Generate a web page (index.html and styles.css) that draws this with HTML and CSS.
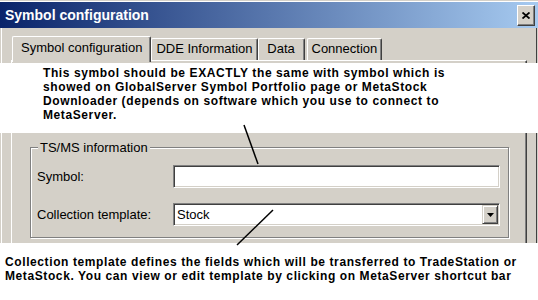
FILE: index.html
```html
<!DOCTYPE html>
<html>
<head>
<title>Symbol configuration</title>
<meta name="viewport" content="width=device-width, initial-scale=1.0">
<link rel="stylesheet" href="styles.css">
</head>
<body>
<div class="window">
  <div class="titlebar">
    <span class="title">Symbol configuration</span>
    <div class="close">
      <svg width="8" height="7" viewBox="0 0 8 7">
        <path d="M0.5 0.5 L7.5 6.5 M7.5 0.5 L0.5 6.5" stroke="#000" stroke-width="1.8" fill="none"/>
      </svg>
    </div>
  </div>

  <div class="tabs">
    <div class="tab active">Symbol configuration</div>
    <div class="tab">DDE Information</div>
    <div class="tab tab-data">Data</div>
    <div class="tab">Connection</div>
  </div>

  <div class="panel">
    <fieldset class="group">
      <legend>TS/MS information</legend>
      <div class="form">
        <label>Symbol:</label>
        <div class="field"></div>
        <label>Collection template:</label>
        <div class="field combo">
          <span class="value">Stock</span>
          <span class="drop">
            <svg width="7" height="4" viewBox="0 0 7 4"><path d="M0 0 H7 L3.5 4 Z" fill="#000"/></svg>
          </span>
        </div>
      </div>
    </fieldset>
  </div>

  <!-- callouts drawn over the dialog -->
  <div class="note note-top">
    This symbol should be EXACTLY the same with symbol which is<br>
    showed on GlobalServer Symbol Portfolio page or MetaStock<br>
    Downloader (depends on software which you use to connect to<br>
    MetaServer.
  </div>
  <div class="note note-bottom">
    Collection template defines the fields which will be transferred to TradeStation or<br>
    MetaStock. You can view or edit template by clicking on MetaServer shortcut bar
  </div>
  <svg class="pointers" width="538" height="300">
    <line x1="244" y1="125" x2="258" y2="164" stroke="#000" stroke-width="1.5"/>
    <line x1="273" y1="210" x2="237" y2="245" stroke="#000" stroke-width="1.5"/>
  </svg>
</div>
</body>
</html>
```

FILE: styles.css
```css
body {
  margin: 0;
  font-family: "Liberation Sans", Arial, sans-serif;
  font-size: 13px;
  color: #000;
}

.window {
  position: relative;
  width: 538px;
  height: 300px;
  box-sizing: border-box;
  padding-top: 2px;
  overflow: hidden;
  display: flex;
  flex-direction: column;
  background: #d4d0c8;
  box-shadow: inset 0 1px #d4d0c8, inset 0 2px #fff,
              inset 1px 0 #d4d0c8, inset 2px 0 #fff,
              inset -1px 0 #d4d0c8, inset -2px 0 #404040;
}

/* title bar */
.titlebar {
  height: 26px;
  display: flex;
  align-items: center;
  justify-content: space-between;
  background: linear-gradient(to right, #0a246a, #a6caf0);
}

.title {
  padding-left: 5px;
  color: #fff;
  font-weight: bold;
  font-size: 14px;
}

.close {
  width: 18px;
  height: 21px;
  margin-right: 3px;
  box-sizing: border-box;
  display: flex;
  align-items: center;
  justify-content: center;
  background: #d4d0c8;
  border: 1px solid;
  border-color: #fff #404040 #404040 #fff;
  box-shadow: inset -1px -1px #808080;
}

/* tabs */
.tabs {
  display: flex;
  align-items: flex-end;
  margin: 8px 0 0 12px;
}

.tab {
  position: relative;
  min-width: 47px;
  box-sizing: border-box;
  padding: 0 4px 2px 4px;
  line-height: 19px;
  text-align: center;
  white-space: nowrap;
  background: #d4d0c8;
  border-top: 1px solid #fff;
  border-left: 1px solid #fff;
  border-right: 1px solid #404040;
  border-radius: 2px 2px 0 0;
  box-shadow: inset -1px 0 #808080;
}

.tab.active {
  z-index: 1;
  padding: 0 8px 4px 8px;
  line-height: 21px;
  margin-bottom: -2px;
}

.tab-data {
  margin-right: 2px;
}

/* tab page */
.panel {
  flex: 1;
  margin: 0 11px;
  padding: 79px 17px 0 18px;
  border-top: 1px solid #fff;
  border-left: 1px solid #fff;
  border-right: 1px solid #404040;
  box-shadow: inset -1px 0 #808080;
}

.group {
  margin: 0;
  min-width: 0;
  padding: 0 6px 11px 6px;
  border: 1px solid #808080;
  box-shadow: inset 1px 1px #fff, 1px 1px #fff;
}

.group legend {
  margin-left: 1px;
  padding: 0 2px;
  background: #d4d0c8;
}

.form {
  margin-top: 10px;
  display: grid;
  grid-template-columns: 136px 327px;
  row-gap: 15px;
  align-items: center;
}

.field {
  height: 23px;
  box-sizing: border-box;
  background: #fff;
  border: 1px solid;
  border-color: #808080 #fff #fff #808080;
  box-shadow: inset 1px 1px #404040, inset -1px -1px #d4d0c8;
}

.combo {
  display: flex;
  align-items: center;
  padding: 1px;
}

.combo .value {
  flex: 1;
  padding-left: 2px;
}

.drop {
  width: 16px;
  height: 19px;
  box-sizing: border-box;
  display: flex;
  align-items: center;
  justify-content: center;
  background: #d4d0c8;
  border: 1px solid;
  border-color: #d4d0c8 #404040 #404040 #d4d0c8;
  box-shadow: inset 1px 1px #fff, inset -1px -1px #808080;
}

/* callouts */
.note {
  position: absolute;
  left: 0;
  right: 0;
  box-sizing: border-box;
  background: #fff;
  font-weight: bold;
  font-size: 12px;
  line-height: 14px;
  letter-spacing: 0.6px;
  white-space: nowrap;
}

.note-top {
  top: 63px;
  height: 70px;
  padding: 3px 0 0 43px;
}

.note-bottom {
  top: 243px;
  bottom: 0;
  padding: 12px 0 0 5px;
}

.pointers {
  position: absolute;
  left: 0;
  top: 0;
  pointer-events: none;
}
```
